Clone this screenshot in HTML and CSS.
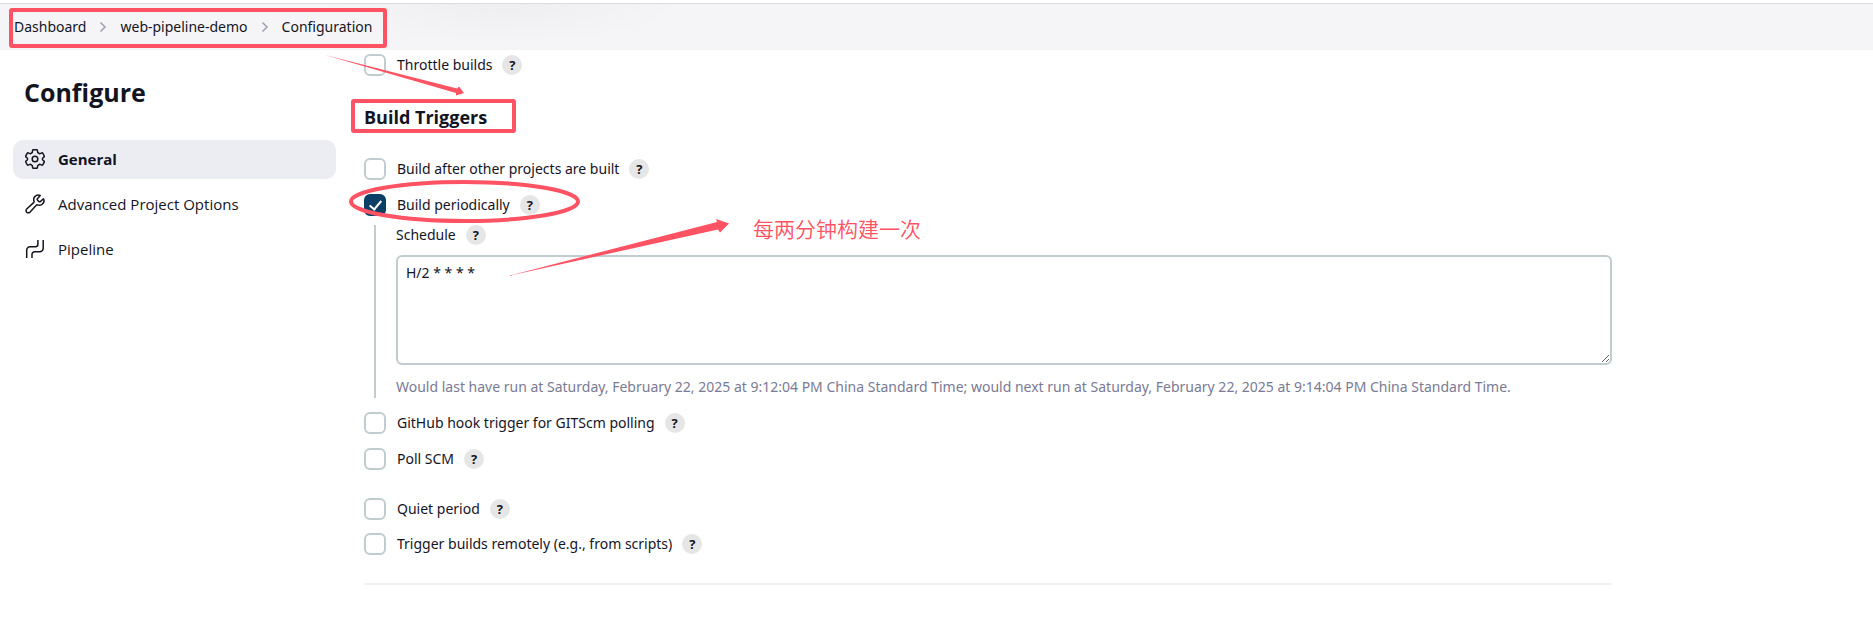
FILE: index.html
```html
<!DOCTYPE html>
<html lang="en">
<head>
<meta charset="utf-8">
<title>web-pipeline-demo Config</title>
<link rel="stylesheet" href="styles.css">
</head>
<body>
<header class="breadcrumb-bar">
  <nav aria-label="Breadcrumb">
    <ol class="breadcrumbs">
      <li><a href="#">Dashboard</a></li>
      <li class="sep" aria-hidden="true"><svg width="8" height="12" viewBox="0 0 8 12"><path d="M1.5 1.5 6 6l-4.5 4.5"/></svg></li>
      <li><a href="#">web-pipeline-demo</a></li>
      <li class="sep" aria-hidden="true"><svg width="8" height="12" viewBox="0 0 8 12"><path d="M1.5 1.5 6 6l-4.5 4.5"/></svg></li>
      <li><a href="#">Configuration</a></li>
    </ol>
  </nav>
</header>
<div class="page">
  <aside class="side-panel">
    <h1 class="title">Configure</h1>
    <nav class="tasks" aria-label="Sections">
      <a class="task task-active" href="#general">
        <svg class="icon" viewBox="0 0 20 20"><path d="M8.300.8h3.400q.6 0 .7.6l.3 1.900q.1.400.5.600l1.100.6q.4.200.8.100l1.700-.7q.6-.2.900.3l1.600 2.800q.3.500-.2.900l-1.300 1.100q-.3.300-.3.700v.600q0 .4.300.7l1.300 1.100q.5.400.2.900l-1.600 2.800q-.3.500-.9.300l-1.700-.7q-.4-.1-.8.100l-1.100.6q-.4.200-.5.600l-.3 1.900q-.1.600-.7.600H8.300q-.6 0-.7-.6l-.3-1.900q-.1-.4-.5-.6l-1.100-.6q-.4-.2-.8-.1l-1.700.7q-.6.200-.9-.3L.7 13q-.3-.5.200-.9L2.200 11q.3-.3.300-.7v-.6q0-.4-.3-.7L.9 7.900Q.4 7.500.7 7l1.600-2.800q.3-.5.900-.3l1.700.7q.4.100.8-.1l1.100-.6q.4-.2.5-.6l.3-1.900q.1-.6.700-.6z"/><circle cx="10" cy="10" r="2.800"/></svg>
        <span>General</span>
      </a>
      <a class="task" href="#advanced">
        <svg class="icon" viewBox="0 0 20 20"><path d="M15.600 7.400a1.300 1.300 0 0 1-1.800 0l-1.200-1.200a1.300 1.300 0 0 1 0-1.800L15.200 1.500C13.400.700 11.300 1 10 2.400c-1.400 1.300-1.500 3.200-1 4.900a1.300 1.300 0 0 1-.4 1.300L1.700 15a2.150 2.150 0 1 0 3.200 3.200l6.400-6.900a1.300 1.300 0 0 1 1.300-.4c1.700.5 3.600.4 4.900-.9 1.400-1.300 1.700-3.800 1-5.200z"/></svg>
        <span>Advanced Project Options</span>
      </a>
      <a class="task" href="#pipeline">
        <svg class="icon" viewBox="0 0 20 20"><path d="M1.700 19V11.300a3.500 3.500 0 0 1 3.500-3.500h5.200a2.500 2.500 0 0 0 2.500-2.500V1M7 19v-3.700a2.500 2.500 0 0 1 2.500-2.500h5.200a3.500 3.500 0 0 0 3.500-3.500V1"/></svg>
        <span>Pipeline</span>
      </a>
    </nav>
  </aside>
  <main class="config">
    <div class="option">
      <label><input type="checkbox">Throttle builds</label>
      <button class="help" type="button">?</button>
    </div>
    <h2 class="section-title">Build Triggers</h2>
    <div class="options">
      <div class="option">
        <label><input type="checkbox">Build after other projects are built</label>
        <button class="help" type="button">?</button>
      </div>
      <div class="option">
        <label><input type="checkbox" checked>Build periodically</label>
        <button class="help" type="button">?</button>
      </div>
    </div>
    <div class="nested">
      <div class="field-label">
        <label for="schedule">Schedule</label>
        <button class="help" type="button">?</button>
      </div>
      <textarea id="schedule" spellcheck="false">H/2 * * * *</textarea>
      <p class="hint">Would last have run at Saturday, February 22, 2025 at 9:12:04 PM China Standard Time; would next run at Saturday, February 22, 2025 at 9:14:04 PM China Standard Time.</p>
    </div>
    <div class="options">
      <div class="option">
        <label><input type="checkbox">GitHub hook trigger for GITScm polling</label>
        <button class="help" type="button">?</button>
      </div>
      <div class="option">
        <label><input type="checkbox">Poll SCM</label>
        <button class="help" type="button">?</button>
      </div>
    </div>
    <div class="options options-general">
      <div class="option">
        <label><input type="checkbox">Quiet period</label>
        <button class="help" type="button">?</button>
      </div>
      <div class="option">
        <label><input type="checkbox">Trigger builds remotely (e.g., from scripts)</label>
        <button class="help" type="button">?</button>
      </div>
    </div>
    <hr class="divider">
  </main>
</div>
<svg class="annotations" width="940" height="300" viewBox="0 0 940 300">
  <g class="outline">
    <rect x="11" y="10" width="374" height="36" rx="1"/>
    <rect x="353" y="101" width="161" height="30" rx="1"/>
    <ellipse cx="464.500" cy="201.500" rx="113.500" ry="19.500"/>
  </g>
  <g class="arrow">
    <path d="M325 55 457 88.500 459 86.500 464 93 456 95.500 456 93Z"/>
    <path d="M508 276 717 222 716 219 729 223.500 720 232.500 718 229.500Z"/>
  </g>
  <text x="753" y="237">每两分钟构建一次</text>
</svg>
</body>
</html>
```
FILE: styles.css
```css
:root {
  --text: #14141f;
  --muted: #7a7a94;
  --border: #c1cccf;
  --primary: #0b3f66;
  --mark: #ff5263;
}

* {
  box-sizing: border-box;
}

body {
  margin: 0;
  position: relative;
  background: #fff;
  color: var(--text);
  font: 14px/20px "Noto Sans", "Noto Sans CJK SC", sans-serif;
}

a {
  color: inherit;
  text-decoration: none;
}

.breadcrumb-bar {
  margin-top: 3px;
  height: 47px;
  padding: 0 14px;
  display: flex;
  align-items: center;
  border-top: 1px solid #dcdcdf;
  background:
    radial-gradient(ellipse 180px 40px at 500px 0, #eeeef1, transparent),
    #f5f5f8;
}

.breadcrumbs {
  display: flex;
  align-items: center;
  gap: 13px;
  margin: 0;
  padding: 0;
  list-style: none;
}

.sep {
  display: flex;
}

.sep svg {
  fill: none;
  stroke: #a0a0b0;
  stroke-width: 1.5;
}

.page {
  display: grid;
  grid-template-columns: 323px minmax(0, 1248px);
  gap: 28px;
  padding: 0 13px;
}

.title {
  margin: 25px 11px 31px;
  font-family: "Open Sans", sans-serif;
  font-size: 25px;
  line-height: 34px;
}

.tasks {
  display: flex;
  flex-direction: column;
  gap: 6px;
  font-family: "Open Sans", sans-serif;
  font-size: 15px;
}

.task {
  display: flex;
  align-items: center;
  gap: 13px;
  height: 39px;
  padding: 0 12px 2px;
  border-radius: 10px;
}

.task-active {
  background: #ecedf3;
  font-weight: 700;
}

.icon {
  width: 20px;
  height: 20px;
  fill: none;
  stroke: currentColor;
  stroke-width: 1.5;
  stroke-linejoin: round;
}

.config {
  padding-top: 4px;
}

.option,
.option label,
.field-label {
  display: flex;
  align-items: center;
}

.option,
.field-label {
  gap: 10px;
}

.option label {
  gap: 11px;
}

.options {
  display: flex;
  flex-direction: column;
  gap: 14px;
}

input[type="checkbox"] {
  appearance: none;
  width: 22px;
  height: 22px;
  margin: 0;
  border: 2px solid var(--border);
  border-radius: 6px;
  background: #fff;
}

input[type="checkbox"]:checked {
  border-color: var(--primary);
  background: var(--primary);
  display: grid;
  place-items: center;
}

input[type="checkbox"]:checked::before {
  content: "";
  width: 5px;
  height: 10px;
  margin-bottom: 2px;
  border: solid #fff;
  border-width: 0 2px 2px 0;
  transform: rotate(40deg);
}

.help {
  width: 20px;
  height: 20px;
  padding: 0;
  border: 0;
  border-radius: 50%;
  background: #e6e6e6;
  color: var(--text);
  font: 700 13px/20px "Open Sans", sans-serif;
}

.section-title {
  margin: 29px 0 29px;
  font-family: "Open Sans", sans-serif;
  font-size: 18px;
  line-height: 24px;
}

.nested {
  margin: 9px 0 14px 10px;
  padding-left: 20px;
  border-left: 2px solid var(--border);
}

textarea {
  display: block;
  width: 100%;
  height: 110px;
  margin: 10px 0 12px;
  padding: 6px 8px;
  border: 2px solid var(--border);
  border-radius: 6px;
  background: #fff;
  color: inherit;
  font: inherit;
}

.hint {
  margin: 0;
  padding-bottom: 1px;
  color: var(--muted);
}

.options-general {
  margin-top: 28px;
  gap: 13px;
}

.divider {
  height: 2px;
  margin: 28px 0 32px;
  border: 0;
  background: #f1f1f6;
}

.annotations {
  position: absolute;
  top: 0;
  left: 0;
  pointer-events: none;
}

.outline {
  fill: none;
  stroke: var(--mark);
  stroke-width: 4;
}

.arrow,
.annotations text {
  fill: var(--mark);
}

.annotations text {
  font: 350 21px "Noto Sans CJK SC", sans-serif;
}
```
